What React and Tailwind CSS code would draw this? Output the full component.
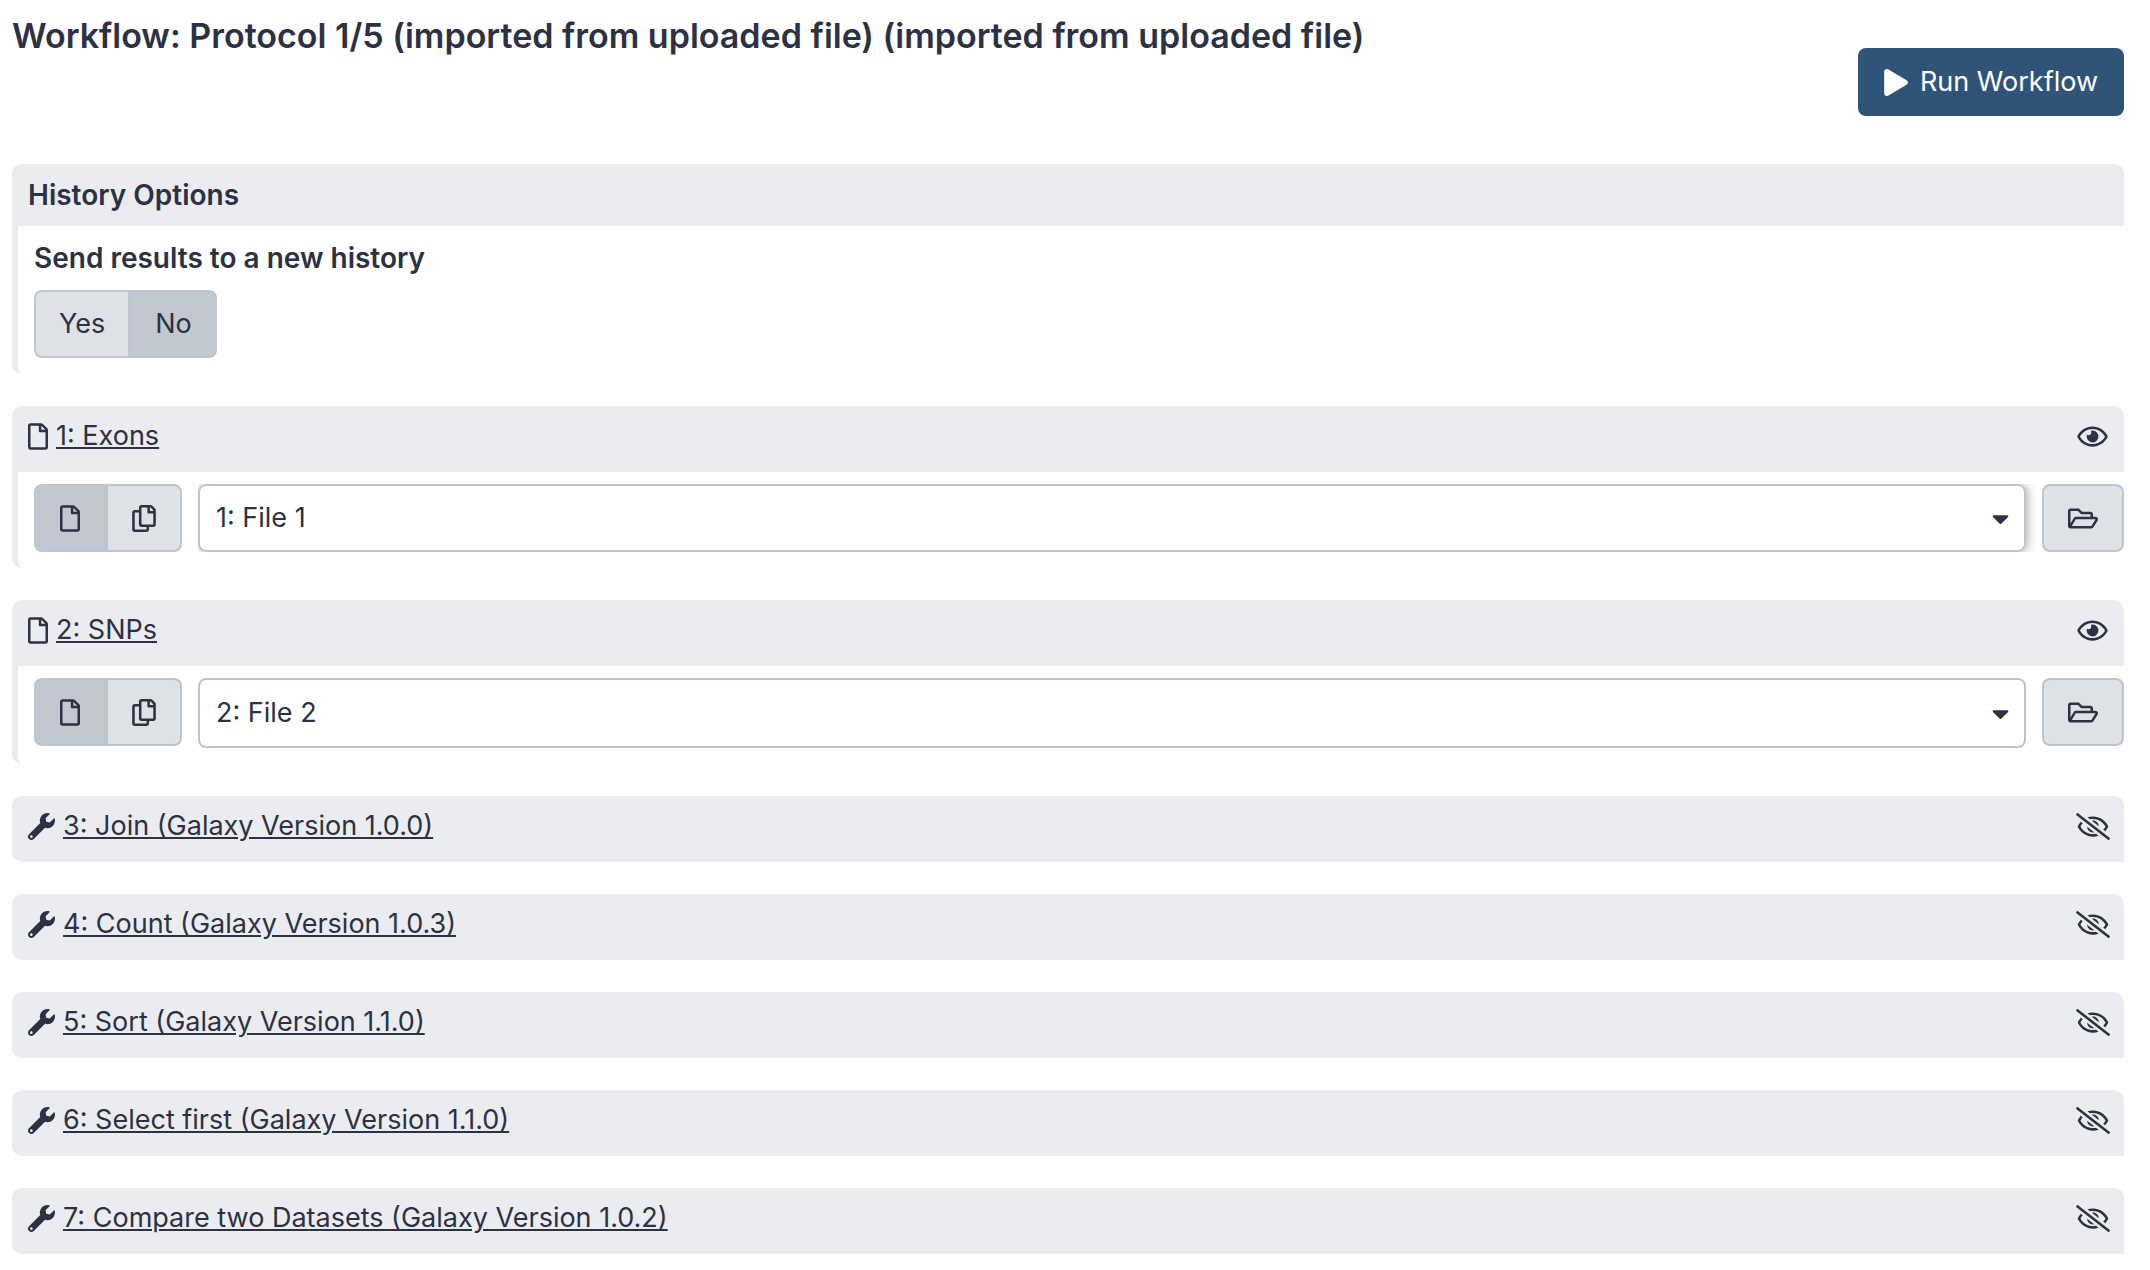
import { useState } from "react";
import {
  FaCaretDown,
  FaPlay,
  FaRegCopy,
  FaRegEye,
  FaRegEyeSlash,
  FaRegFile,
  FaRegFolderOpen,
  FaWrench,
} from "react-icons/fa";

const inputs = [
  { id: "exons", title: "1: Exons", file: "1: File 1", raised: true },
  { id: "snps", title: "2: SNPs", file: "2: File 2", raised: false },
];

const tools = [
  "3: Join (Galaxy Version 1.0.0)",
  "4: Count (Galaxy Version 1.0.3)",
  "5: Sort (Galaxy Version 1.1.0)",
  "6: Select first (Galaxy Version 1.1.0)",
  "7: Compare two Datasets (Galaxy Version 1.0.2)",
];

function ToggleGroup({ label, options, initial, padding }) {
  const [active, setActive] = useState(initial);
  return (
    <div role="group" aria-label={label} className="flex shrink-0">
      {options.map((option, index) => (
        <button
          key={option.name}
          type="button"
          aria-label={option.name}
          aria-pressed={active === index}
          onClick={() => setActive(index)}
          className={
            "flex h-[68px] items-center border-2 border-[#bdc5d0] first:rounded-l-lg last:rounded-r-lg " +
            padding +
            (active === index ? " bg-[#c1c8d0]" : " bg-[#dee2e6]")
          }
        >
          {option.content}
        </button>
      ))}
    </div>
  );
}

function StepHeader({ icon, title, hidden, attached }) {
  return (
    <div
      className={
        "flex items-center justify-between bg-[#ebecef] pt-[10px] pb-4 pl-4 " +
        (attached ? "rounded-t-[10px] pr-4" : "rounded-l-[10px] rounded-tr-[10px] pr-[14px]")
      }
    >
      <a href="#step" className="flex items-center gap-2 leading-10">
        {icon}
        <span className="underline">{title}</span>
      </a>
      <button type="button" aria-label={hidden ? "Expand step" : "Collapse step"}>
        {hidden ? <FaRegEyeSlash className="h-[27px] w-[34px]" /> : <FaRegEye className="h-[27px] w-[31px]" />}
      </button>
    </div>
  );
}

function InputStep({ step }) {
  return (
    <section>
      <StepHeader icon={<FaRegFile className="h-[27px] w-5" />} title={step.title} attached />
      <div className="flex rounded-bl-[10px] border-l-[6px] border-[#ebecef] pt-3 pb-4 pl-4">
        <ToggleGroup
          label="Input type"
          initial={0}
          padding="px-6"
          options={[
            { name: "Single dataset", content: <FaRegFile className="h-[27px] w-5" /> },
            { name: "Multiple datasets", content: <FaRegCopy className="h-[27px] w-6" /> },
          ]}
        />
        <div className="ml-4 flex-1 overflow-hidden pr-3">
          <div
            className={
              "relative rounded-lg " + (step.raised ? "shadow-[2px_0_10px_rgba(0,0,0,0.3)]" : "")
            }
          >
            <select
              id={step.id}
              aria-label={step.title}
              className={
                "block w-full appearance-none rounded-lg border-2 border-[#bdc5d0] bg-white px-4 " +
                (step.raised ? "h-[68px]" : "h-[70px]")
              }
            >
              <option>{step.file}</option>
            </select>
            <FaCaretDown className="pointer-events-none absolute inset-y-0 right-3 my-auto" />
          </div>
        </div>
        <button
          type="button"
          aria-label="Browse datasets"
          className="ml-1 flex h-[68px] items-center rounded-lg border-2 border-[#bdc5d0] bg-[#dee2e6] px-6"
        >
          <FaRegFolderOpen className="h-[27px] w-[30px]" />
        </button>
      </div>
    </section>
  );
}

export default function App() {
  return (
    <main className="min-h-screen bg-white pr-[26px] pb-4 pl-3 font-['Inter',sans-serif] text-[27px] leading-10 text-[#2c3143]">
      <header className="flex items-start justify-between pb-12">
        <h1 className="pt-3 text-[34px] leading-[48px] font-semibold">
          Workflow: Protocol 1/5 (imported from uploaded file) (imported from uploaded file)
        </h1>
        <button
          type="button"
          className="mt-12 flex h-[68px] shrink-0 items-center gap-3 rounded-lg bg-[#2f5477] px-[26px] text-white"
        >
          <FaPlay className="h-[27px] w-6" />
          Run Workflow
        </button>
      </header>

      <div className="flex flex-col gap-8">
        <section>
          <h2 className="rounded-t-[10px] bg-[#ebecef] px-4 py-[11px] text-[28px] leading-10 font-semibold">
            History Options
          </h2>
          <div className="rounded-bl-[10px] border-l-[6px] border-[#ebecef] py-3 pb-4 pl-4">
            <p className="mb-3 text-[28px] leading-10 font-semibold">Send results to a new history</p>
            <ToggleGroup
              label="Send results to a new history"
              initial={1}
              padding="px-[23px]"
              options={[
                { name: "Yes", content: "Yes" },
                { name: "No", content: "No" },
              ]}
            />
          </div>
        </section>

        {inputs.map((step) => (
          <InputStep key={step.id} step={step} />
        ))}

        {tools.map((title) => (
          <section key={title}>
            <StepHeader icon={<FaWrench />} title={title} hidden />
          </section>
        ))}
      </div>
    </main>
  );
}
